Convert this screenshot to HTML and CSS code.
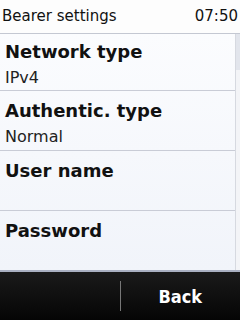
FILE: index.html
```html
<!DOCTYPE html>
<html lang="en">
<head>
  <meta charset="UTF-8">
  <title>Bearer settings</title>
  <link rel="stylesheet" href="styles.css">
</head>
<body>

  <div class="pantalla">
    <header class="estado">
      <span class="titulo">Bearer settings</span>
      <span class="hora">07:50</span>
    </header>

    <div class="cuerpo">
      <div class="lista">
        <div class="fila fila-primera">
          <div class="etiqueta">Network type</div>
          <div class="valor">IPv4</div>
        </div>
        <div class="fila">
          <div class="etiqueta">Authentic. type</div>
          <div class="valor">Normal</div>
        </div>
        <div class="fila">
          <div class="etiqueta">User name</div>
          <div class="valor"></div>
        </div>
        <div class="fila fila-ultima">
          <div class="etiqueta">Password</div>
        </div>
      </div>
      <div class="scroll">
        <div class="scroll-thumb"></div>
      </div>
    </div>

    <footer class="teclas">
      <div class="tecla"></div>
      <div class="divisor"></div>
      <div class="tecla tecla-back">Back</div>
    </footer>
  </div>

</body>
</html>
```

FILE: styles.css
```css
body {
  margin: 0;
  font-family: 'DejaVu Sans', sans-serif;
  background-color: #000;
}

.pantalla {
  width: 240px;
  height: 320px;
  display: flex;
  flex-direction: column;
  overflow: hidden;
}

.estado {
  height: 34px;
  box-sizing: border-box;
  display: flex;
  justify-content: space-between;
  align-items: center;
  padding: 0 2px 2px 2px;
  background-color: #fdfdfd;
  border-bottom: 1px solid #c4c8d2;
  color: #111;
  font-size: 15px;
}

.cuerpo {
  flex: 1;
  display: flex;
  background: linear-gradient(#fbfcfe, #f1f4fa);
  border-bottom: 2px solid #a9b0c2;
}

.lista {
  flex: 1;
}

.fila {
  height: 60px;
  box-sizing: border-box;
  padding: 7px 0 0 5px;
  border-bottom: 1px solid #c9ccd6;
}

.fila-primera {
  height: 57px;
  padding-top: 5px;
}

.fila-ultima {
  border-bottom: none;
  height: 58px;
  padding-top: 7px;
}

.etiqueta {
  font-weight: bold;
  font-size: 18px;
  line-height: 26px;
  color: #111;
}

.valor {
  font-size: 16px;
  line-height: 26px;
  color: #222;
}

.scroll {
  width: 4px;
  border-left: 1px solid #d6d9e0;
  background-color: #f3f4f7;
}

.scroll-thumb {
  height: 36px;
  background-color: #e2e5ec;
}

.teclas {
  height: 48px;
  display: flex;
  align-items: center;
  background: linear-gradient(#1a1a1a, #050505);
}

.tecla {
  flex: 1;
  text-align: center;
  color: #fff;
  font-family: 'DejaVu Sans Condensed', 'DejaVu Sans', sans-serif;
  font-weight: bold;
  font-size: 18px;
}

.divisor {
  width: 1px;
  height: 30px;
  background-color: #777;
}
```
